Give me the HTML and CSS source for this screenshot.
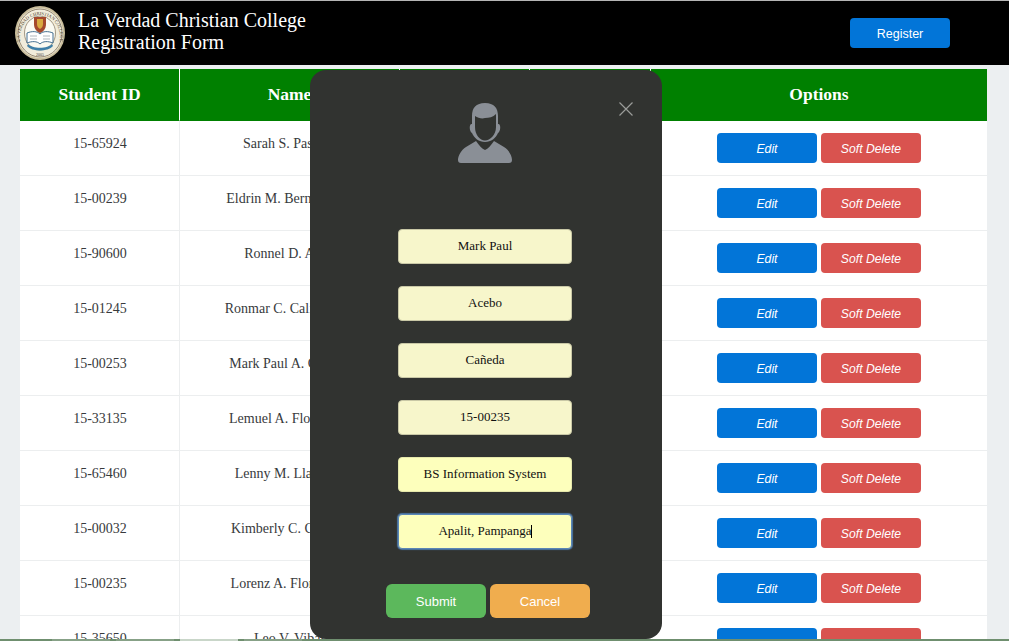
FILE: index.html
```html
<!DOCTYPE html>
<html lang="en">
  <head>
    <meta charset="UTF-8" />
    <meta name="viewport" content="width=device-width, initial-scale=1.0" />
    <title>La Verdad Christian College Registration Form</title>
    <link rel="stylesheet" href="styles.css">
  </head>
  <body>
    <header class="topbar">
      <div class="brand">
        <svg class="seal" viewBox="0 0 50 54" width="50" height="54">
          <ellipse cx="25" cy="27" rx="25" ry="27" fill="#c9bd9c" />
          <ellipse cx="25" cy="27" rx="23" ry="25" fill="#f1ecdc" />
          <ellipse cx="25" cy="27" rx="22" ry="24" fill="none" stroke="#6b5a42" stroke-width="0.7" />
          <ellipse cx="25" cy="27" rx="15.5" ry="17" fill="#fbfaf2" stroke="#6b5a42" stroke-width="0.6" />
          <path id="sealArc" d="M6 38 A20 22 0 1 1 44 38" fill="none" />
          <text class="seal-text"><textPath href="#sealArc" startOffset="50%" text-anchor="middle">LA VERDAD CHRISTIAN COLLEGE</textPath></text>
          <path d="M19 11 h12 v7 c0 5 -3 8 -6 9 c-3 -1 -6 -4 -6 -9 z" fill="#a5482c" />
          <path d="M22 13 h6 v5 c0 2 -1 4 -3 5 c-2 -1 -3 -3 -3 -5 z" fill="#d8a93f" />
          <path d="M13 38 c4 5 20 5 24 0 l1 2 c-5 6 -21 6 -26 0 z" fill="#3f7fa8" />
          <path d="M12 27 c5 -2 10 -2 13 1 c3 -3 8 -3 13 -1 v10 c-5 -2 -10 -2 -13 1 c-3 -3 -8 -3 -13 -1 z" fill="#fff" stroke="#2f5f85" stroke-width="0.9" />
          <path d="M15 30 h7 M15 33 h7 M28 30 h7 M28 33 h7" stroke="#7a8790" stroke-width="0.6" />
          <text class="seal-year" x="25" y="50" text-anchor="middle">2005</text>
        </svg>
        <h1 class="brand-title">La Verdad Christian College<br />Registration Form</h1>
      </div>
      <button class="btn btn-blue btn-register">Register</button>
    </header>

    <main class="content">
      <table class="students">
        <thead>
          <tr>
            <th class="col-id">Student ID</th>
            <th class="col-name">Name</th>
            <th class="col-a"></th>
            <th class="col-b"></th>
            <th class="col-options">Options</th>
          </tr>
        </thead>
        <tbody>
          <tr><td>15-65924</td><td>Sarah S. Pascual</td><td></td><td></td><td class="cell-options"><div class="actions"><button class="btn btn-blue btn-em">Edit</button><button class="btn btn-red btn-em">Soft Delete</button></div></td></tr>
          <tr><td>15-00239</td><td>Eldrin M. Bernardo Jr.</td><td></td><td></td><td class="cell-options"><div class="actions"><button class="btn btn-blue btn-em">Edit</button><button class="btn btn-red btn-em">Soft Delete</button></div></td></tr>
          <tr><td>15-90600</td><td>Ronnel D. Abad</td><td></td><td></td><td class="cell-options"><div class="actions"><button class="btn btn-blue btn-em">Edit</button><button class="btn btn-red btn-em">Soft Delete</button></div></td></tr>
          <tr><td>15-01245</td><td>Ronmar C. Calilung Jr.</td><td></td><td></td><td class="cell-options"><div class="actions"><button class="btn btn-blue btn-em">Edit</button><button class="btn btn-red btn-em">Soft Delete</button></div></td></tr>
          <tr><td>15-00253</td><td>Mark Paul A. Cañeda</td><td></td><td></td><td class="cell-options"><div class="actions"><button class="btn btn-blue btn-em">Edit</button><button class="btn btn-red btn-em">Soft Delete</button></div></td></tr>
          <tr><td>15-33135</td><td>Lemuel A. Florentino</td><td></td><td></td><td class="cell-options"><div class="actions"><button class="btn btn-blue btn-em">Edit</button><button class="btn btn-red btn-em">Soft Delete</button></div></td></tr>
          <tr><td>15-65460</td><td>Lenny M. Llanes Jr</td><td></td><td></td><td class="cell-options"><div class="actions"><button class="btn btn-blue btn-em">Edit</button><button class="btn btn-red btn-em">Soft Delete</button></div></td></tr>
          <tr><td>15-00032</td><td>Kimberly C. Castillo</td><td></td><td></td><td class="cell-options"><div class="actions"><button class="btn btn-blue btn-em">Edit</button><button class="btn btn-red btn-em">Soft Delete</button></div></td></tr>
          <tr><td>15-00235</td><td>Lorenz A. Florentino</td><td></td><td></td><td class="cell-options"><div class="actions"><button class="btn btn-blue btn-em">Edit</button><button class="btn btn-red btn-em">Soft Delete</button></div></td></tr>
          <tr><td>15-35650</td><td>Leo V. Vibar</td><td></td><td></td><td class="cell-options"><div class="actions"><button class="btn btn-blue btn-em">Edit</button><button class="btn btn-red btn-em">Soft Delete</button></div></td></tr>
        </tbody>
      </table>
    </main>

    <div class="strip">
      <span class="strip-tab"></span>
      <span class="strip-tab"></span>
      <span class="strip-tab strip-tab-on"></span>
      <span class="strip-tab"></span>
    </div>

    <section class="modal">
      <button class="modal-close" aria-label="Close">
        <svg viewBox="0 0 14 14" width="14" height="14">
          <path d="M0.5 0.5 L13.5 13.5 M13.5 0.5 L0.5 13.5" stroke="#9a9c99" stroke-width="1.2" fill="none" />
        </svg>
      </button>
      <svg class="avatar" viewBox="0 0 54 60" width="54" height="60">
        <path d="M18 38 L8 44 C3 47 0 53 0 57 C0 59 1 60 3 60 L51 60 C53 60 54 59 54 57 C54 53 51 47 46 44 L36 38 C33 42 30 46 27 47 C24 46 21 42 18 38 Z" fill="#8a8f96" />
        <path d="M27 0 C18 0 14 5 14 13 L14 21 C11 20 11 28 14 30 C16 35 21 39 27 39 C33 39 38 35 40 30 C43 28 43 20 40 21 L40 13 C40 5 36 0 27 0 Z" fill="#8a8f96" />
        <path d="M17 13 C20 15 24 16 27 15 C31 15 35 14 38 11 L38 24 C38 32 32 37.5 27 37.5 C22 37.5 17 32 17 24 Z" fill="#313330" />
      </svg>
      <form class="modal-form">
        <input class="field" type="text" value="Mark Paul" />
        <input class="field" type="text" value="Acebo" />
        <input class="field" type="text" value="Cañeda" />
        <input class="field" type="text" value="15-00235" />
        <input class="field field-filled" type="text" value="BS Information System" />
        <div class="field-wrap">
          <input class="field field-filled field-active" type="text" value="Apalit, Pampanga" />
          <span class="caret"></span>
        </div>
      </form>
      <div class="modal-actions">
        <button class="btn btn-green btn-large">Submit</button>
        <button class="btn btn-orange btn-large">Cancel</button>
      </div>
    </section>
  </body>
</html>
```

FILE: styles.css
```css
html,
body {
  height: 641px;
  overflow: hidden;
}
body {
  margin: 0;
  background-color: #eceff1;
  font-family: "Liberation Serif", "Times New Roman", serif;
  color: #373a3c;
}
.topbar {
  display: flex;
  justify-content: space-between;
  align-items: center;
  box-sizing: border-box;
  height: 65px;
  padding-right: 59px;
  background-color: #000;
  border-top: 1px solid #b5b5b5;
}
.brand {
  display: flex;
  align-items: center;
  gap: 13px;
  padding-left: 15px;
}
.seal {
  display: block;
}
.seal-text {
  font-family: "Liberation Serif", serif;
  font-size: 4.6px;
  fill: #4b3d2b;
}
.seal-year {
  font-family: "Liberation Serif", serif;
  font-size: 4px;
  fill: #333;
}
.brand-title {
  margin: 0 0 4px;
  font-size: 20px;
  font-weight: normal;
  line-height: 22px;
  color: #fff;
}
.btn {
  border: none;
  border-radius: 4px;
  color: #fff;
  font-family: "Liberation Sans", Arial, sans-serif;
  font-size: 12.5px;
  width: 100px;
  height: 30px;
  padding: 1px 0 0;
  cursor: pointer;
}
.btn-em {
  font-style: italic;
  font-size: 12.2px;
}
.btn-large {
  height: 34px;
  border-radius: 6px;
  font-size: 13px;
  padding: 0;
}
.btn-blue {
  background-color: #0275d8;
}
.btn-red {
  background-color: #d9534f;
}
.btn-green {
  background-color: #5cb85c;
}
.btn-orange {
  background-color: #f0ad4e;
}
.content {
  padding: 4px 22px 0 20px;
}
.students {
  width: 967px;
  table-layout: fixed;
  border-collapse: separate;
  border-spacing: 0;
  background-color: #fff;
}
.students th {
  box-sizing: border-box;
  height: 52px;
  background-color: #008000;
  color: #fff;
  font-size: 17.5px;
  border-right: 1px solid #fff;
  border-bottom: 1px solid #008000;
}
.students th:last-child {
  border-right: none;
}
.students td {
  padding: 13px 0 11px;
  font-size: 14px;
  line-height: 20px;
  text-align: center;
  vertical-align: top;
  border-bottom: 1px solid #eceeef;
  border-right: 1px solid #eceeef;
}
.students td:first-child {
  padding-left: 1px;
}
.students .cell-options {
  padding: 12px 0;
  border-right: none;
}
.col-id {
  width: 160px;
}
.col-name {
  width: 220px;
}
.col-a {
  width: 130px;
}
.col-b {
  width: 121px;
}
.actions {
  display: flex;
  justify-content: center;
  gap: 4px;
}
.strip {
  position: absolute;
  left: 0;
  right: 0;
  top: 639px;
  height: 2px;
  display: flex;
  gap: 6px;
  padding-left: 52px;
  background-color: #6f8f6f;
}
.strip-tab {
  width: 58px;
  background-color: #87a187;
}
.strip-tab-on {
  background-color: #c9d6c9;
}
.modal {
  position: absolute;
  left: 310px;
  top: 70px;
  width: 352px;
  height: 569px;
  box-sizing: border-box;
  padding-top: 33px;
  border-radius: 16px;
  background-color: #313330;
  display: flex;
  flex-direction: column;
  align-items: center;
}
.modal-close {
  position: absolute;
  top: 32px;
  left: 309px;
  padding: 0;
  border: none;
  background: none;
  line-height: 0;
}
.avatar {
  display: block;
  flex: none;
  margin-right: 2px;
}
.modal-form {
  display: flex;
  flex-direction: column;
  gap: 22px;
  margin: 66px 2px 0 0;
}
.field {
  display: block;
  box-sizing: border-box;
  width: 174px;
  height: 35px;
  padding: 0 4px 2px;
  border: 1px solid #c9c8a6;
  border-radius: 4px;
  outline: none;
  background-color: #f7f6cb;
  color: #111;
  font-family: "Liberation Serif", "Times New Roman", serif;
  font-size: 13px;
  text-align: center;
}
.field-filled {
  background-color: #fdffbc;
  border-color: #e6e8ab;
}
.field-active {
  border-color: #5b86b5;
  box-shadow: 0 0 1px 1px #4c76a5;
}
.field-wrap {
  position: relative;
}
.caret {
  position: absolute;
  left: 133px;
  top: 11px;
  width: 1px;
  height: 13px;
  background-color: #000;
}
.modal-actions {
  display: flex;
  gap: 4px;
  margin: 35px 0 0 4px;
}
```
